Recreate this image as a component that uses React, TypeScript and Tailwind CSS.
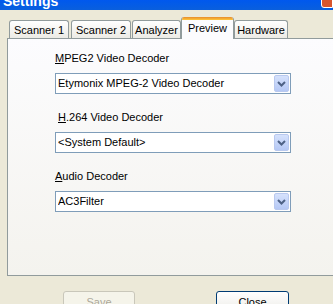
import { ReactNode } from 'react';

const tabs = [
  { label: 'Scanner 1', w: 'w-[60px]', ml: 'ml-[9px]' },
  { label: 'Scanner 2', w: 'w-[60px]', ml: 'ml-[2px]' },
  { label: 'Analyzer', w: 'w-[49px]', ml: 'ml-[1px]' },
  { label: 'Preview', w: 'w-[53px]', ml: 'ml-0', active: true },
  { label: 'Hardware', w: 'w-[54px]', ml: 'ml-0' },
];

function Combo({ value }: { value: string }) {
  return (
    <div className="flex h-[21px] w-[236px] shrink-0 items-center border border-[#7f9db9] bg-white pl-[2px] pr-[1px]">
      <span className="flex-1 truncate">{value}</span>
      <div className="flex h-[17px] w-[15px] items-center justify-center rounded-[2px] border border-[#b9c9ef] bg-gradient-to-b from-[#d6e2fc] to-[#b5c8f5]">
        <svg width="9" height="6" viewBox="0 0 9 6">
          <path d="M1 1 L4.5 4.5 L8 1" fill="none" stroke="#4d6185" strokeWidth="2" />
        </svg>
      </div>
    </div>
  );
}

function Field({ label, children, indent }: { label: ReactNode; children: ReactNode; indent?: boolean }) {
  return (
    <div className="flex shrink-0 flex-col gap-[8px]">
      <div className={indent ? 'pl-[3px] leading-[13px]' : 'leading-[13px]'}>{label}</div>
      {children}
    </div>
  );
}

export default function App() {
  return (
    <div className="relative flex h-[304px] w-[333px] flex-col overflow-hidden bg-[#ece9d8] text-[11px] text-black [font-family:'Liberation_Sans',Arial,sans-serif]">
      {/* title bar, mostly scrolled off the top */}
      <div className="flex h-[10px] shrink-0 items-end justify-between overflow-hidden bg-gradient-to-b from-[#0058ee] to-[#0a5fdd]">
        <span className="mb-[1px] ml-[3px] text-[14px] font-bold leading-[16px] text-white">Settings</span>
        <div className="mb-[2px] h-[10px] w-[12px] self-end rounded-bl-[3px] border border-white bg-[#d8552d]" />
      </div>

      {/* tabs */}
      <div className="mt-[7px] flex h-[21px] shrink-0 items-end">
        {tabs.map((t) =>
          t.active ? (
            <div
              key={t.label}
              className={`${t.ml} ${t.w} relative z-10 -mb-[1px] flex h-[22px] flex-col overflow-hidden rounded-t-[3px] border-x border-[#919b9c] bg-[#fcfcfe]`}
            >
              <div className="h-[3px] bg-gradient-to-b from-[#e68b2c] to-[#ffc73c]" />
              <div className="flex flex-1 items-center justify-center pb-[2px]">{t.label}</div>
            </div>
          ) : (
            <div
              key={t.label}
              className={`${t.ml} ${t.w} flex h-[18px] items-center justify-center rounded-t-[3px] border border-b-0 border-[#919b9c] bg-gradient-to-b from-white to-[#ecebe5] pt-[1px]`}
            >
              {t.label}
            </div>
          )
        )}
      </div>

      {/* panel */}
      <div className="ml-[7px] flex h-[238px] w-[330px] shrink-0 flex-col gap-[17px] border border-[#919b9c] bg-gradient-to-b from-[#fcfcfe] to-[#f4f3ee] pl-[47px] pt-[13px]">
        <Field
          label={
            <>
              <span className="underline">M</span>PEG2 Video Decoder
            </>
          }
        >
          <Combo value="Etymonix MPEG-2 Video Decoder" />
        </Field>
        <Field
          indent
          label={
            <>
              <span className="underline">H</span>.264 Video Decoder
            </>
          }
        >
          <Combo value="<System Default>" />
        </Field>
        <Field
          label={
            <>
              <span className="underline">A</span>udio Decoder
            </>
          }
        >
          <Combo value="AC3Filter" />
        </Field>
      </div>

      {/* buttons */}
      <div className="mt-[15px] flex shrink-0">
        <button className="ml-[63px] h-[23px] w-[72px] rounded-[3px] border border-[#c9c7ba] bg-[#f5f4ea] leading-[19px] text-[#aca899]">
          Save
        </button>
        <button className="ml-[81px] h-[23px] w-[73px] rounded-[3px] border border-[#003c74] bg-gradient-to-b from-white to-[#ecebe6] leading-[19px]">
          Close
        </button>
      </div>
    </div>
  );
}
